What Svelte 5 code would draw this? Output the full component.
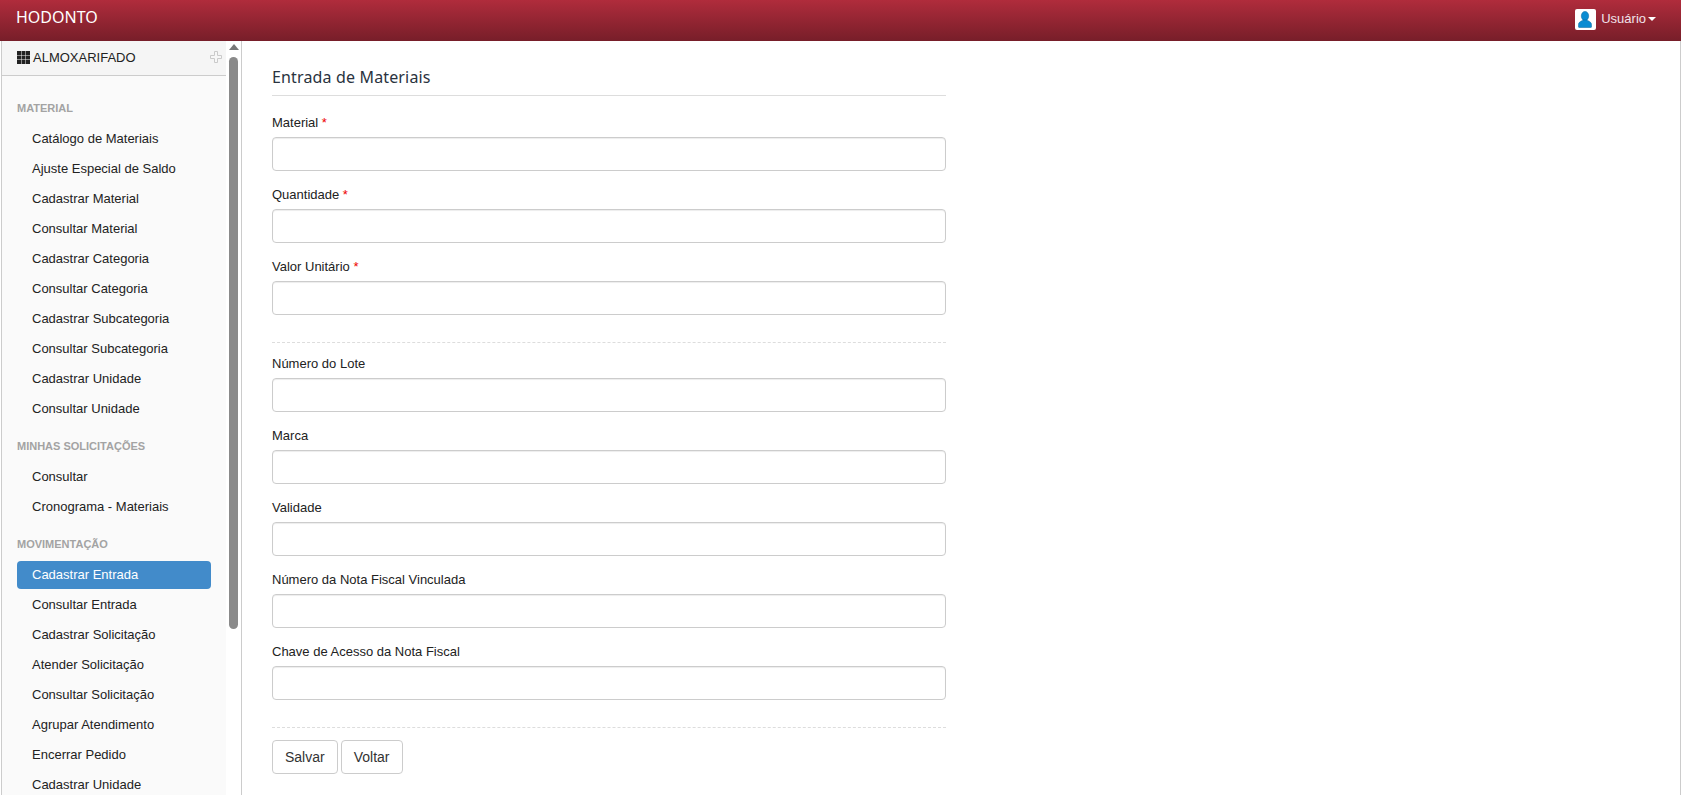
<script lang="ts">
	const sections = [
		{
			title: 'Material',
			items: [
				'Catálogo de Materiais',
				'Ajuste Especial de Saldo',
				'Cadastrar Material',
				'Consultar Material',
				'Cadastrar Categoria',
				'Consultar Categoria',
				'Cadastrar Subcategoria',
				'Consultar Subcategoria',
				'Cadastrar Unidade',
				'Consultar Unidade'
			]
		},
		{
			title: 'Minhas Solicitações',
			items: ['Consultar', 'Cronograma - Materiais']
		},
		{
			title: 'Movimentação',
			items: [
				'Cadastrar Entrada',
				'Consultar Entrada',
				'Cadastrar Solicitação',
				'Atender Solicitação',
				'Consultar Solicitação',
				'Agrupar Atendimento',
				'Encerrar Pedido',
				'Cadastrar Unidade'
			]
		}
	];

	const required = ['Material', 'Quantidade', 'Valor Unitário'];
	const optional = [
		'Número do Lote',
		'Marca',
		'Validade',
		'Número da Nota Fiscal Vinculada',
		'Chave de Acesso da Nota Fiscal'
	];
	const cells = [0, 4.5, 9];
</script>

<div class="page">
	<header class="navbar">
		<span class="brand">HODONTO</span>
		<div class="user">
			<span class="avatar">
				<svg viewBox="0 0 21 21" width="21" height="21" aria-hidden="true">
					<ellipse cx="10" cy="7" rx="3.7" ry="4.6" fill="#0a8cd2" stroke="#07679c" stroke-width=".5" />
					<path d="M3.5 18v-2.6c0-2.4 3-3.4 4.8-4.4h3.4c1.8 1 4.8 2 4.8 4.4V18c0 .3-.3.5-.6.5H4.100c-.3 0-.6-.2-.6-.5z" fill="#0a8cd2" stroke="#07679c" stroke-width=".5" />
				</svg>
			</span>
			<span class="user-name">Usuário</span>
			<span class="caret"></span>
		</div>
	</header>

	<div class="body">
		<aside class="sidebar">
			<div class="side-col">
				<div class="side-head">
					<svg class="grid-icon" viewBox="0 0 13 13" width="13" height="13" aria-hidden="true">
						{#each cells as y}
							{#each cells as x}
								<rect {x} {y} width="4" height="4" fill="#222" />
							{/each}
						{/each}
					</svg>
					<span class="side-title">ALMOXARIFADO</span>
					<svg class="plus" viewBox="0 0 12 12" width="12" height="12" aria-hidden="true">
						<path d="M4.500.5h3v4h4v3h-4v4h-3v-4h-4v-3h4z" fill="#f7f7f7" stroke="#cacaca" />
					</svg>
				</div>
				<nav class="menu">
					{#each sections as s}
						<div class="menu-title">{s.title}</div>
						<ul>
							{#each s.items as item}
								<li class:active={item === 'Cadastrar Entrada'}>{item}</li>
							{/each}
						</ul>
					{/each}
				</nav>
			</div>
			<div class="scrollbar">
				<span class="arrow"></span>
				<span class="thumb"></span>
			</div>
		</aside>

		<main class="content">
			<form class="form">
				<h1>Entrada de Materiais</h1>
				{#each required as label}
					<div class="group">
						<label>{label} <span class="req">*</span><input type="text" /></label>
					</div>
				{/each}
				<hr />
				{#each optional as label}
					<div class="group">
						<label>{label}<input type="text" /></label>
					</div>
				{/each}
				<hr />
				<div class="actions">
					<button type="button">Salvar</button>
					<button type="button">Voltar</button>
				</div>
			</form>
		</main>
	</div>
</div>

<style>
	:global(body) {
		margin: 0;
		background: #fff;
	}

	.page {
		height: 795px;
		overflow: hidden;
		display: flex;
		flex-direction: column;
		font-family: 'Liberation Sans', Arial, sans-serif;
		font-size: 13px;
		color: #222;
	}

	.navbar {
		flex: none;
		height: 41px;
		box-sizing: border-box;
		padding: 0 25px 0 16px;
		display: flex;
		align-items: center;
		justify-content: space-between;
		background: linear-gradient(to bottom, #b02c3c, #771e29);
	}

	.brand {
		font-family: 'Noto Sans', sans-serif;
		font-size: 16px;
		color: #fff;
		margin-top: -8px;
	}

	.user {
		display: flex;
		align-items: center;
		margin-top: -4px;
		color: #f0e2ea;
	}

	.avatar {
		display: block;
		width: 21px;
		height: 21px;
		margin: 2px 5px 0 0;
		background: #fff;
		border-radius: 2px;
	}

	.avatar svg {
		display: block;
	}

	.caret {
		width: 0;
		height: 0;
		margin-left: 2px;
		border-top: 4px solid #fff;
		border-left: 4px solid transparent;
		border-right: 4px solid transparent;
	}

	.body {
		flex: 1;
		min-height: 0;
		display: flex;
		border-right: 1px solid #ccc;
	}

	.sidebar {
		flex: none;
		width: 241px;
		margin-left: 1px;
		box-sizing: border-box;
		display: flex;
		border-left: 1px solid #ccc;
		border-right: 1px solid #ccc;
	}

	.side-col {
		flex: 1;
		min-width: 0;
		background: #fafafa;
		overflow: hidden;
	}

	.side-head {
		height: 35px;
		box-sizing: border-box;
		padding: 0 4px 2px 15px;
		display: flex;
		align-items: center;
		background: #f5f5f5;
		border-bottom: 1px solid #ccc;
	}

	.grid-icon {
		flex: none;
		margin-right: 3px;
	}

	.side-title {
		flex: 1;
		color: #222;
	}

	.menu {
		padding: 0 15px;
	}

	.menu-title {
		height: 18px;
		line-height: 18px;
		margin: 14px 0 8px;
		font-size: 11px;
		font-weight: bold;
		text-transform: uppercase;
		color: #a3a3a3;
	}

	.menu .menu-title:first-child {
		margin-top: 23px;
	}

	.menu ul {
		margin: 0;
		padding: 0;
		list-style: none;
	}

	.menu li {
		height: 28px;
		line-height: 28px;
		margin-bottom: 2px;
		padding-left: 15px;
		border-radius: 4px;
		color: #222;
	}

	.menu li.active {
		background: #428bca;
		color: #fff;
	}

	.scrollbar {
		flex: none;
		width: 15px;
		background: #fff;
		display: flex;
		flex-direction: column;
		align-items: center;
	}

	.arrow {
		width: 0;
		height: 0;
		margin-top: 3px;
		border-bottom: 6px solid #777;
		border-left: 5px solid transparent;
		border-right: 5px solid transparent;
	}

	.thumb {
		width: 9px;
		height: 572px;
		margin-top: 7px;
		border-radius: 5px;
		background: #8a8a8a;
	}

	.content {
		flex: 1;
		min-width: 0;
		padding: 0 30px;
	}

	.form {
		width: 674px;
	}

	h1 {
		margin: 0 0 18px;
		padding: 26px 0 7px;
		font-family: 'Noto Sans', sans-serif;
		font-size: 16px;
		font-weight: normal;
		line-height: 21px;
		letter-spacing: .15px;
		color: #2a3340;
		border-bottom: 1px solid #ddd;
	}

	.group {
		margin-bottom: 15px;
	}

	label {
		display: block;
		line-height: 18px;
	}

	.req {
		color: #e00;
	}

	input {
		display: block;
		width: 100%;
		height: 34px;
		box-sizing: border-box;
		margin-top: 5px;
		padding: 6px 12px;
		background: #fff;
		border: 1px solid #ccc;
		border-radius: 4px;
		box-shadow: inset 0 1px 1px rgba(0, 0, 0, .075);
		outline: none;
	}

	hr {
		margin: 27px 0 12px;
		border: 0;
		border-top: 1px dashed #ddd;
	}

	.actions {
		display: flex;
		gap: 3px;
	}

	button {
		height: 34px;
		padding: 0 12px;
		font: 14px 'Liberation Sans', Arial, sans-serif;
		color: #333;
		background: #fff;
		border: 1px solid #ccc;
		border-radius: 4px;
	}
</style>
